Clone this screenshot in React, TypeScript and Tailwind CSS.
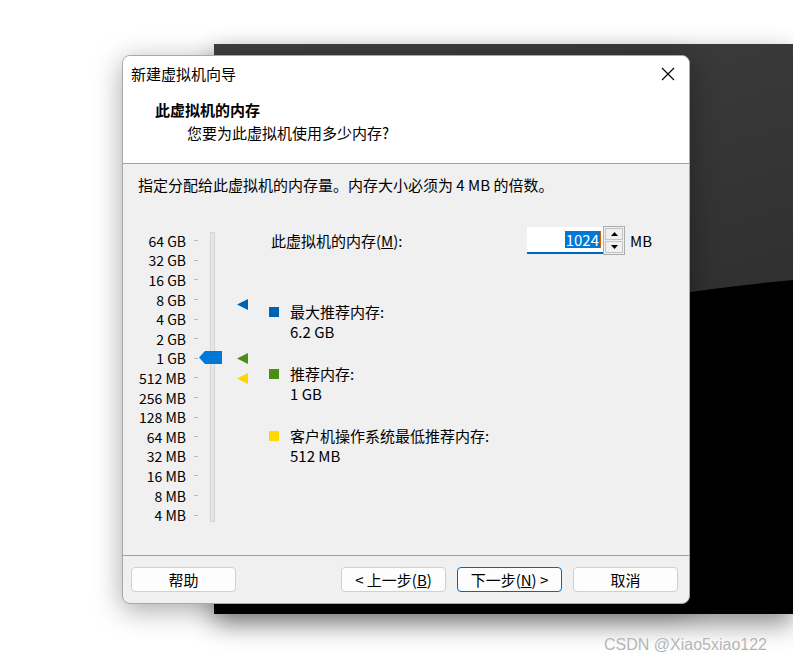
import React from 'react';

const sizes = ['64 GB', '32 GB', '16 GB', '8 GB', '4 GB', '2 GB', '1 GB', '512 MB', '256 MB', '128 MB', '64 MB', '32 MB', '16 MB', '8 MB', '4 MB'];

function Marker({ color, top }: { color: string; top: number }) {
  return (
    <svg className="absolute left-[99px]" style={{ top }} width="11" height="11" viewBox="0 0 11 11">
      <polygon points="0,5.5 11,0 11,11" fill={color} />
    </svg>
  );
}

function Legend({ color, title, value }: { color: string; title: string; value: string }) {
  return (
    <div className="flex">
      <div className={`mt-[5px] h-[10px] w-[10px] ${color}`} />
      <div className="ml-[11px] leading-[20px]">
        <div>{title}</div>
        <div>{value}</div>
      </div>
    </div>
  );
}

function Button({ children, primary }: { children: React.ReactNode; primary?: boolean }) {
  return (
    <button
      className={`flex h-[25px] w-[105px] items-center justify-center rounded-[4px] border bg-[#fdfdfd] text-[15px] leading-none text-black ${
        primary ? 'border-[#0067c0]' : 'border-[#d0d0d0]'
      }`}
    >
      {children}
    </button>
  );
}

export default function App() {
  return (
    <div
      className="relative h-[662px] w-[793px] overflow-hidden bg-white text-black"
      style={{ fontFamily: '"Noto Sans CJK SC", "Liberation Sans", sans-serif' }}
    >
      {/* background window */}
      <div className="absolute left-[214px] top-[44px] h-[570px] w-[579px] shadow-[0_10px_24px_rgba(0,0,0,0.45)]">
        <svg width="579" height="570" viewBox="0 0 579 570" className="block">
          <defs>
            <linearGradient id="top" x1="0" y1="0" x2="0.3" y2="1">
              <stop offset="0" stopColor="#3f3f3f" />
              <stop offset="1" stopColor="#282828" />
            </linearGradient>
          </defs>
          <rect width="579" height="570" fill="url(#top)" />
          <path d="M0,360 Q300,262 579,236 L579,570 L0,570 Z" fill="#000" />
        </svg>
      </div>

      {/* dialog */}
      <div className="absolute left-[122px] top-[55px] flex h-[549px] w-[568px] flex-col overflow-hidden rounded-[8px] border border-[#a8a8a8] bg-[#f0f0f0] text-[15px] shadow-[0_6px_28px_rgba(0,0,0,0.35)]">
        <div className="border-b border-[#a0a0a0] bg-white">
          <div className="flex h-[36px] items-center justify-between pl-[8px] pr-[14px]">
            <span className="leading-[20px]">新建虚拟机向导</span>
            <svg width="14" height="14" viewBox="0 0 14 14">
              <path d="M1 1 L13 13 M13 1 L1 13" stroke="#000" strokeWidth="1.1" />
            </svg>
          </div>
          <div className="pb-[20px] pl-[32px] pt-[8px]">
            <div className="font-bold leading-[20px]">此虚拟机的内存</div>
            <div className="mt-[3px] pl-[32px] leading-[20px]">您要为此虚拟机使用多少内存?</div>
          </div>
        </div>

        <div className="flex-1 pl-[15px] pt-[11px]">
          <div className="leading-[20px]">指定分配给此虚拟机的内存量。内存大小必须为 4 MB 的倍数。</div>

          <div className="mt-[32px] flex">
            {/* slider */}
            <div className="relative flex w-[130px] pt-[4px]">
              <div className="flex flex-col">
                {sizes.map((s) => (
                  <div key={s} className="flex h-[19.6px] items-center">
                    <span className="w-[48px] whitespace-nowrap text-right text-[14px] leading-none">{s}</span>
                    <span className="ml-[8px] h-px w-[4px] bg-[#b8b8b8]" />
                  </div>
                ))}
              </div>
              <div className="ml-[12px] mt-[1px] h-[290px] w-[5px] border border-[#d4d4d4] bg-[#e6e6e6]" />
              <svg className="absolute left-[61px] top-[124px]" width="23" height="13" viewBox="0 0 23 13">
                <polygon points="0,6.5 6,0 23,0 23,13 6,13" fill="#0078d7" />
              </svg>
              <Marker color="#0063b1" top={72} />
              <Marker color="#4a8f12" top={126} />
              <Marker color="#fcd600" top={146} />
            </div>

            {/* details */}
            <div className="ml-[1px] flex flex-col">
              <div className="flex h-[27px] items-center">
                <span className="w-[258px] pl-[2px] leading-none">
                  此虚拟机的内存(<u>M</u>):
                </span>
                <div className="flex h-[27px] w-[76px] items-center justify-end border-b-2 border-[#0067c0] bg-white pr-[2px]">
                  <span className="bg-[#0078d7] px-px leading-[17px] text-white">1024</span>
                  <span className="h-[17px] w-px bg-[#e05a00]" />
                </div>
                <div className="flex h-[29px] w-[22px] flex-col border border-[#adadad] bg-[#f0f0f0] p-px">
                  <div className="flex flex-1 items-center justify-center border border-[#c4c4c4]">
                    <svg width="7" height="4" viewBox="0 0 7 4">
                      <polygon points="3.5,0 7,4 0,4" fill="#000" />
                    </svg>
                  </div>
                  <div className="mt-px flex flex-1 items-center justify-center border border-[#c4c4c4]">
                    <svg width="7" height="4" viewBox="0 0 7 4">
                      <polygon points="0,0 7,0 3.5,4" fill="#000" />
                    </svg>
                  </div>
                </div>
                <span className="ml-[5px] leading-none">MB</span>
              </div>

              <div className="mt-[48px] flex flex-col gap-[22px]">
                <Legend color="bg-[#0063b1]" title="最大推荐内存:" value="6.2 GB" />
                <Legend color="bg-[#4a8f12]" title="推荐内存:" value="1 GB" />
                <Legend color="bg-[#ffd800]" title="客户机操作系统最低推荐内存:" value="512 MB" />
              </div>
            </div>
          </div>
        </div>

        <div className="flex h-[48px] items-center border-t border-[#a0a0a0] pl-[8px] pr-[11px]">
          <Button>帮助</Button>
          <div className="ml-auto flex gap-[11px]">
            <Button>&lt; 上一步(<u>B</u>)</Button>
            <Button primary>下一步(<u>N</u>) &gt;</Button>
            <Button>取消</Button>
          </div>
        </div>
      </div>

      <div
        className="absolute left-[604px] top-[634px] whitespace-nowrap text-[16px] leading-[22px] text-[#b4b4b4]"
        style={{ fontFamily: '"Liberation Sans", sans-serif', textShadow: '0 0 1px #fff, 0 0 1px #fff' }}
      >
        CSDN @Xiao5xiao122
      </div>
    </div>
  );
}
